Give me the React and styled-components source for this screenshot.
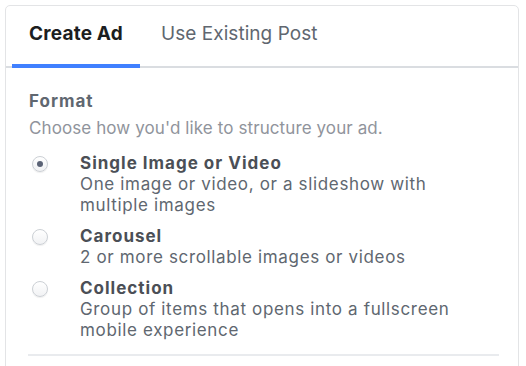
import React, { useState } from "react";
import styled, { createGlobalStyle } from "styled-components";

const Global = createGlobalStyle`
  html, body { margin: 0; padding: 0; background: #fff; }
  body { font-family: Inter, "Liberation Sans", Arial, sans-serif; -webkit-font-smoothing: antialiased; }
  * { box-sizing: border-box; }
`;

const Page = styled.div`
  padding: 5px 0 0 5px;
  width: 526px;
  height: 366px;
  overflow: hidden;
`;

const Card = styled.div`
  width: 514px;
  height: 400px;
  border: 1px solid #e3e4e6;
  border-radius: 5px;
  background: #fff;
  padding: 0 6px;
`;

const TabBar = styled.div`
  display: flex;
  height: 62px;
  border-bottom: 2px solid #dadde1;
  margin: 0 -6px;
  padding: 0 6px;
`;

const Tab = styled.button`
  all: unset;
  display: flex;
  align-items: center;
  padding: 0 17px 7px;
  margin-right: 4px;
  font-size: 19px;
  letter-spacing: ${(p) => (p.$active ? "0.2px" : "0.05px")};
  font-weight: ${(p) => (p.$active ? 700 : 400)};
  color: ${(p) => (p.$active ? "#1c1e21" : "#606770")};
  box-shadow: ${(p) => (p.$active ? "inset 0 -4px 0 #4080ff" : "none")};
  margin-bottom: -2px;
  cursor: pointer;
`;

const Body = styled.div`
  padding: 23px 13px 0 17px;
`;

const SectionTitle = styled.div`
  font-size: 17px;
  font-weight: 700;
  letter-spacing: 1px;
  color: #606770;
  line-height: 21px;
`;

const SectionHint = styled.div`
  font-size: 17px;
  letter-spacing: 0.1px;
  color: #90949c;
  line-height: 21px;
  margin-top: 6px;
`;

const Options = styled.div`
  display: flex;
  flex-direction: column;
  gap: 10px;
  margin-top: 14px;
`;

const Option = styled.label`
  display: grid;
  grid-template-columns: 51px 1fr;
  cursor: pointer;
`;

const Radio = styled.span`
  width: 16px;
  height: 16px;
  margin: 3px 0 0 3px;
  border-radius: 50%;
  border: 1px solid #ccd0d5;
  background: linear-gradient(#ffffff, #f1f2f4);
  box-shadow: 0 1px 1px rgba(0, 0, 0, 0.07);
  display: flex;
  align-items: center;
  justify-content: center;
  &::after {
    content: "";
    width: 6px;
    height: 6px;
    border-radius: 50%;
    background: ${(p) => (p.$checked ? "#5b6376" : "transparent")};
  }
`;

const OptionText = styled.div`
  display: flex;
  flex-direction: column;
`;

const OptionTitle = styled.div`
  font-size: 17px;
  font-weight: 700;
  letter-spacing: 1px;
  color: #4b4f56;
  line-height: 21px;
`;

const OptionDesc = styled.div`
  font-size: 17px;
  letter-spacing: 0.65px;
  color: #606770;
  line-height: 21px;
  max-width: 385px;
`;

const Divider = styled.div`
  height: 2px;
  background: #e9ebee;
  margin: 13px 0 0 -1px;
`;

const options = [
  { id: "single", title: "Single Image or Video", desc: "One image or video, or a slideshow with multiple images" },
  { id: "carousel", title: "Carousel", desc: "2 or more scrollable images or videos" },
  { id: "collection", title: "Collection", desc: "Group of items that opens into a fullscreen mobile experience" },
];

export default function App() {
  const [tab, setTab] = useState("create");
  const [sel, setSel] = useState("single");
  return (
    <Page>
      <Global />
      <Card>
        <TabBar>
          <Tab $active={tab === "create"} onClick={() => setTab("create")}>Create Ad</Tab>
          <Tab $active={tab === "existing"} onClick={() => setTab("existing")}>Use Existing Post</Tab>
        </TabBar>
        <Body>
          <SectionTitle>Format</SectionTitle>
          <SectionHint>Choose how you'd like to structure your ad.</SectionHint>
          <Options>
            {options.map((o) => (
              <Option key={o.id} onClick={() => setSel(o.id)}>
                <Radio $checked={sel === o.id} />
                <OptionText>
                  <OptionTitle>{o.title}</OptionTitle>
                  <OptionDesc>{o.desc}</OptionDesc>
                </OptionText>
              </Option>
            ))}
          </Options>
          <Divider />
        </Body>
      </Card>
    </Page>
  );
}
